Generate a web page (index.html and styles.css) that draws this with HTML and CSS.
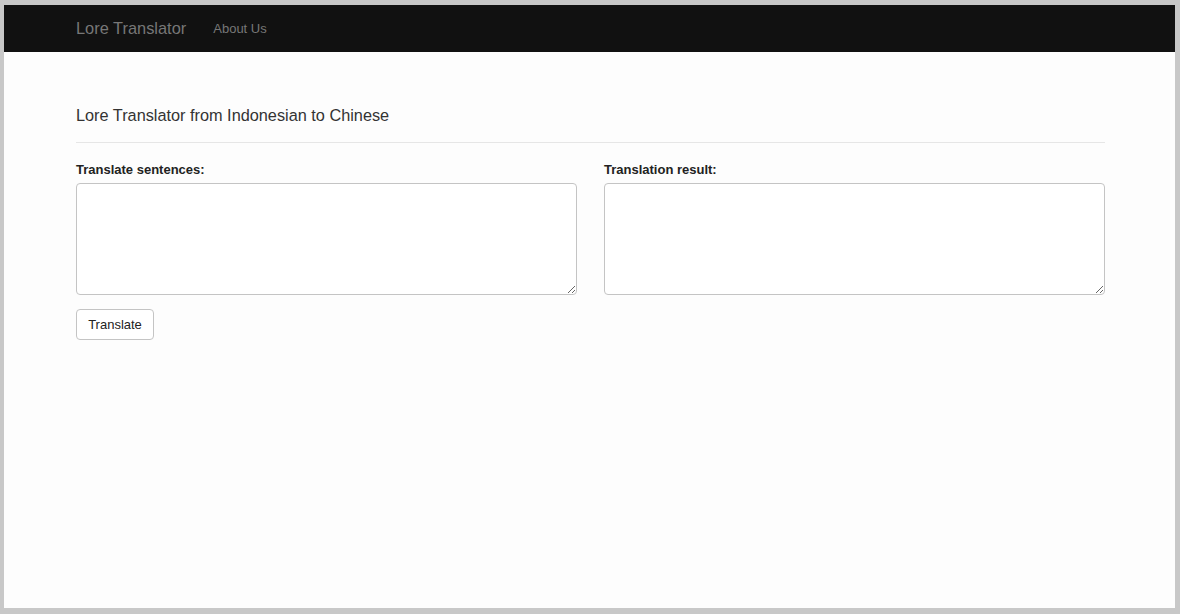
FILE: index.html
```html
<!DOCTYPE html>
<html lang="en">
<head>
  <meta charset="UTF-8" />
  <title>Lore Translator</title>
  <link rel="stylesheet" href="styles.css">
</head>
<body>
  <div class="frame">
    <div class="navbar">
      <a class="brand" href="#">Lore Translator</a>
      <a class="nav-link" href="#">About Us</a>
    </div>

    <div class="container">
      <h4 class="title">Lore Translator from Indonesian to Chinese</h4>
      <hr>
      <div class="row">
        <div class="col">
          <label for="source">Translate sentences:</label>
          <textarea id="source"></textarea>
        </div>
        <div class="col">
          <label for="result">Translation result:</label>
          <textarea id="result"></textarea>
        </div>
      </div>
      <button class="btn">Translate</button>
    </div>
  </div>
</body>
</html>
```

FILE: styles.css
```css
html, body {
  margin: 0;
  height: 100%;
}

body {
  background-color: #c8c8c8;
  font-family: 'Liberation Sans', Arial, sans-serif;
  font-size: 14px;
  color: #333;
}

.frame {
  margin: 5px 5px 0 4px;
  height: 603px;
  background-color: #fdfdfd;
  overflow: hidden;
}

.navbar {
  height: 47px;
  background-color: #111;
  display: flex;
  align-items: center;
  padding-left: 72px;
}

.navbar a {
  color: #777;
  text-decoration: none;
}

.brand {
  font-size: 16.4px;
  margin-right: 27px;
}

.nav-link {
  font-size: 13px;
}

.container {
  padding: 0 70px 0 72px;
}

.title {
  font-size: 16.3px;
  font-weight: normal;
  margin: 0;
  padding-top: 53px;
  line-height: 20px;
}

hr {
  border: none;
  border-top: 1px solid #e6e6e6;
  margin: 17px 0 18px;
}

.row {
  display: grid;
  grid-template-columns: 1fr 1fr;
  column-gap: 27px;
}

label {
  display: block;
  font-weight: bold;
  font-size: 13px;
  line-height: 18px;
  margin-bottom: 4px;
  color: #222;
}

textarea {
  display: block;
  box-sizing: border-box;
  width: 100%;
  height: 112px;
  border: 1px solid #c4c4c4;
  border-radius: 4px;
  background: #fff;
  margin: 0;
}

.btn {
  margin-top: 14px;
  font-family: inherit;
  font-size: 13px;
  color: #222;
  background: #fff;
  border: 1px solid #c4c4c4;
  border-radius: 4px;
  width: 78px;
  height: 31px;
  padding: 0;
}
```
